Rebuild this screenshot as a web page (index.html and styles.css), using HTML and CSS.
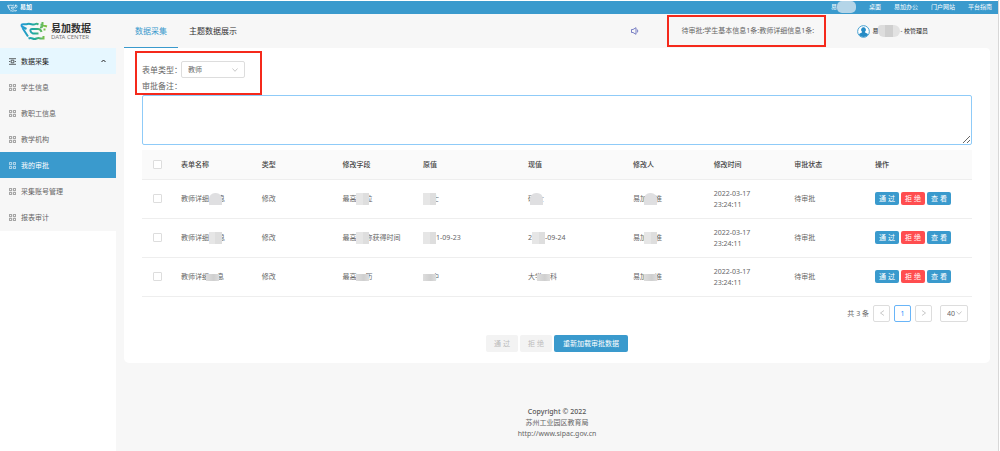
FILE: index.html
```html
<!DOCTYPE html>
<html lang="zh-CN">
<head>
<meta charset="utf-8">
<title>易加数据</title>
<link rel="stylesheet" href="styles.css">
</head>
<body>
<svg class="defs" aria-hidden="true">
  <symbol id="logo" viewBox="0 0 28 20">
    <path d="M6.500 8 1.800 5.500Q.8 3 3.500 3.200T7.500 3T11.500 3.200T15.500 3T18.500 3.500" />
    <path d="M2.500 7 8 15.500M8.500 17.500Q10.500 16.500 12.500 17.500T16.500 17.500T20.500 17.500L23.500 17.500V15" />
    <path d="M18.500 8H12Q10 8 10.500 10T13 12.500H18.500M18.500 8Q21 8.500 21.500 11" />
    <path d="M20 6.500Q22.500 6.500 22.500 4V1M20.500 3.500 27 5.500M24.500 7.500V9.500" />
  </symbol>
  <symbol id="grid" viewBox="0 0 8 8">
    <path d="M.5.5h2.500v2.500H.5zM5 .5h2.500v2.500H5zM.5 5h2.500v2.500H.5zM5 5h2.500v2.500H5z" fill="none" stroke="currentColor" stroke-width=".7"/>
  </symbol>
</svg>
<nav class="topbar">
  <a class="brand" href="#"><svg class="brand-icon"><use href="#logo"/></svg>易加</a>
  <div class="toplinks">
    <a href="#">易<span class="mask mask-top"></span></a>
    <a href="#">桌面</a>
    <a href="#">易加办公</a>
    <a href="#">门户网站</a>
    <a href="#">平台指南</a>
  </div>
</nav>
<header class="header">
  <a class="logo" href="#">
    <svg class="logo-icon"><defs><linearGradient id="lg" gradientUnits="userSpaceOnUse" x1="2" y1="6" x2="25" y2="6"><stop offset="0" stop-color="#249bd4"/><stop offset=".55" stop-color="#20a99c"/><stop offset="1" stop-color="#7ec142"/></linearGradient></defs><use href="#logo"/></svg>
    <span class="logo-text"><b>易加数据</b><small>DATA CENTER</small></span>
  </a>
  <div class="tabs">
    <a class="tab active" href="#">数据采集</a>
    <a class="tab" href="#">主题数据展示</a>
  </div>
  <div class="header-right">
    <svg class="speaker" viewBox="0 0 8 8"><path d="M.5 2.500h1.500L5 .7v6.600L2 5.500H.5zM6.300 2.500q1 1.500 0 3" fill="none" stroke="#5b62b8" stroke-width=".8"/></svg>
    <div class="notice">待审批:学生基本信息1条:教师详细信息1条:</div>
    <div class="user">
      <svg class="avatar" viewBox="0 0 14 14"><circle cx="7" cy="7" r="6.300" fill="#fff" stroke="#3a9acd"/><path d="M7 2.500a2.400 2.700 0 0 1 1.400 5q.2 1 2.600 1.600.9.400.7 1.600A6 6 0 0 1 2.300 10.700q-.2-1.200.7-1.600Q5.400 8.500 5.600 7.500A2.400 2.700 0 0 1 7 2.500" fill="#258bc5"/></svg>
      <span>易<span class="mask mask-user"></span>- 校管理员</span>
    </div>
  </div>
</header>
<div class="layout">
  <aside class="side">
    <nav class="menu">
      <a class="item parent" href="#"><svg class="icon" viewBox="0 0 8 8"><path d="M0 .8h8M0 7.200h8M0 4h1.500M6.500 4H8M2.500 2.500h3v3h-3z" fill="none" stroke="currentColor" stroke-width=".8"/></svg>数据采集<svg class="caret" viewBox="0 0 5 4"><path d="M.5 3l2-2 2 2" fill="none" stroke="currentColor"/></svg></a>
      <a class="item" href="#"><svg class="icon"><use href="#grid"/></svg>学生信息</a>
      <a class="item" href="#"><svg class="icon"><use href="#grid"/></svg>教职工信息</a>
      <a class="item" href="#"><svg class="icon"><use href="#grid"/></svg>教学机构</a>
      <a class="item current" href="#"><svg class="icon"><use href="#grid"/></svg>我的审批</a>
      <a class="item" href="#"><svg class="icon"><use href="#grid"/></svg>采集账号管理</a>
      <a class="item" href="#"><svg class="icon"><use href="#grid"/></svg>报表审计</a>
    </nav>
  </aside>
  <div class="content">
    <main class="card">
      <div class="filters">
        <div class="field"><label for="type">表单类型：</label><select id="type"><option>教师</option></select></div>
        <label class="remark-label" for="remark">审批备注：</label>
      </div>
      <textarea id="remark" class="remark"></textarea>
      <table class="table">
        <colgroup><col class="c-check"><col class="c-mid"><col class="c-mid"><col class="c-mid"><col class="c-wide"><col class="c-wide"><col class="c-mid"><col class="c-mid"><col class="c-mid"><col class="c-wide"></colgroup>
        <thead><tr><th><input type="checkbox" aria-label="全选"></th><th>表单名称</th><th>类型</th><th>修改字段</th><th>原值</th><th>现值</th><th>修改人</th><th>修改时间</th><th>审批状态</th><th>操作</th></tr></thead>
        <tbody>
          <tr><td><input type="checkbox" aria-label="选择"></td><td>教师详细<span class="mask round"></span>息</td><td>修改</td><td>最高<span class="mask"></span>位</td><td><span class="mask"></span>士</td><td>硕<span class="mask round back"></span>士</td><td>易加<span class="mask round mid"></span>准</td><td>2022-03-17<br>23:24:11</td><td>待审批</td><td><div class="ops"><button class="btn">通 过</button><button class="btn danger">拒 绝</button><button class="btn">查 看</button></div></td></tr>
          <tr><td><input type="checkbox" aria-label="选择"></td><td>教师详细<span class="mask"></span>息</td><td>修改</td><td>最高<span class="mask"></span>称获得时间</td><td><span class="mask full"></span>1-09-23</td><td>2<span class="mask full"></span>-09-24</td><td>易加<span class="mask mid"></span>准</td><td>2022-03-17<br>23:24:11</td><td>待审批</td><td><div class="ops"><button class="btn">通 过</button><button class="btn danger">拒 绝</button><button class="btn">查 看</button></div></td></tr>
          <tr><td><input type="checkbox" aria-label="选择"></td><td>教师详细<span class="mask flat mid"></span>息</td><td>修改</td><td>最高<span class="mask flat"></span>历</td><td><span class="mask flat"></span>中</td><td>大学<span class="mask flat back"></span>科</td><td>易加<span class="mask flat mid"></span>准</td><td>2022-03-17<br>23:24:11</td><td>待审批</td><td><div class="ops"><button class="btn">通 过</button><button class="btn danger">拒 绝</button><button class="btn">查 看</button></div></td></tr>
        </tbody>
      </table>
      <div class="pager">
        <span>共 3 条</span>
        <button class="page" aria-label="上一页"><svg viewBox="0 0 6 6"><path d="M5 .5 1.500 3 5 5.500"/></svg></button>
        <button class="page on">1</button>
        <button class="page" aria-label="下一页"><svg viewBox="0 0 6 6"><path d="M1 .5 4.500 3 1 5.500"/></svg></button>
        <select class="size" aria-label="每页条数"><option>40</option></select>
      </div>
      <div class="actions">
        <button class="act" disabled>通 过</button>
        <button class="act" disabled>拒 绝</button>
        <button class="act primary">重新加载审批数据</button>
      </div>
    </main>
    <footer class="footer">
      <div class="copy">Copyright © 2022</div>
      <div>苏州工业园区教育局</div>
      <a href="#">http://www.sipac.gov.cn</a>
    </footer>
  </div>
</div>
</body>
</html>
```
FILE: styles.css
```css
* { box-sizing: border-box; }
body {
  margin: 0 1px 0 0;
  padding-top: 1px;
  min-height: 100vh;
  display: flex;
  flex-direction: column;
  border-right: 1px solid #d8d8d8;
  background: #fff;
  color: #666;
  font: 7px/11px "Noto Sans", "Noto Sans CJK SC", sans-serif;
}
a { color: inherit; text-decoration: none; }
button, select, textarea { font: inherit; color: inherit; margin: 0; }
.defs { position: absolute; width: 0; height: 0; }

.topbar {
  display: flex;
  align-items: center;
  justify-content: space-between;
  height: 13px;
  padding: 0 6px 0 7px;
  background: #3a9acd;
  color: #fff;
  font-size: 6px;
}
.brand { display: flex; align-items: center; gap: 2px; font-weight: 700; }
.brand-icon { width: 11px; height: 8px; fill: none; stroke: #fff; stroke-width: 2; }
.toplinks { display: flex; gap: 13px; }

.header {
  display: flex;
  height: 34px;
  background: #f7f7f7;
}
.logo {
  display: flex;
  align-items: center;
  width: 124px;
  padding-left: 20px;
  gap: 3px;
}
.logo-icon { width: 28px; height: 20px; fill: none; stroke: url(#lg); stroke-width: 2; }
.logo-text { display: flex; flex-direction: column; color: #333; }
.logo-text b { font-size: 10px; line-height: 12px; }
.logo-text small { font-size: 6px; line-height: 6px; color: #777; }
.tabs { display: flex; font-size: 8px; color: #333; }
.tab { padding: 0 11px; line-height: 33px; border-bottom: 1px solid transparent; }
.tab.active { color: #3a9acd; border-color: #3a9acd; }
.header-right { display: flex; align-items: center; margin-left: auto; padding-right: 70px; }
.speaker { width: 8px; height: 8px; margin-right: 28px; }
.notice {
  padding: 0 5px 0 12px;
  width: 159px;
  line-height: 28px;
  border: 2px solid #f5291b;
  white-space: nowrap;
}
.user { display: flex; align-items: center; gap: 2px; margin-left: 31px; font-size: 6px; color: #222; white-space: nowrap; }
.avatar { width: 13px; height: 13px; }

.layout { flex: 1; display: flex; }
.side { width: 116px; }
.menu { background: #f7f7f7; padding-bottom: 1px; }
.item { display: flex; align-items: center; gap: 5px; height: 26px; padding: 0 10px 0 9px; }
.icon { width: 7px; height: 7px; }
.caret { width: 5px; height: 4px; margin-left: auto; }
.parent { background: #e6f7ff; color: #222; }
.current { background: #3a9acd; color: #fff; }

.content { flex: 1; padding: 0 8px; background: #f7f7f7; }
.card { padding: 3px 18px 11px; background: #fff; border-radius: 0 4px 5px 5px; }
.filters {
  width: 127px;
  margin-left: -7px;
  padding: 8px 5px 0;
  border: 2px solid #f5291b;
  font-size: 8px;
}
.field { display: flex; align-items: center; height: 17px; margin-bottom: 1px; }
.field label { width: 39px; white-space: nowrap; }
.field select {
  width: 64px;
  height: 17px;
  padding: 0 6px;
  appearance: none;
  border: 1px solid #ddd;
  border-radius: 2px;
  background: url("data:image/svg+xml,%3Csvg xmlns='http://www.w3.org/2000/svg' viewBox='0 0 6 4'%3E%3Cpath d='M.5.5 3 3.300 5.500.5' fill='none' stroke='%23bbb' stroke-width='.8'/%3E%3C/svg%3E") right 6px center / 6px 4px no-repeat #fff;
  font-size: 7px;
}
.remark-label { display: block; line-height: 14px; white-space: nowrap; }
.remark {
  display: block;
  width: 100%;
  height: 50px;
  border: 1px solid #8fcbf8;
  border-radius: 2px;
  outline: 0;
  background: #fff;
}

.table { width: 100%; margin-top: 5px; table-layout: fixed; border-collapse: collapse; }
.c-check { width: 31px; }
.c-mid { width: 10%; }
.c-wide { width: 13%; }
th, td { padding: 0 8px; text-align: left; white-space: nowrap; border-bottom: 1px solid #eee; }
th { height: 29px; background: #fafafa; font-weight: 500; color: #444; }
td { height: 39px; }
th:first-child, td:first-child { padding: 0 11px; }
input[type="checkbox"] {
  display: block;
  appearance: none;
  width: 9px;
  height: 9px;
  margin: 0;
  border: 1px solid #ddd;
  border-radius: 1px;
  background: #fff;
}
.ops { display: flex; gap: 2px; }
.btn { width: 24px; height: 13px; padding: 0; border: 0; border-radius: 2px; background: #3a9acd; color: #fff; white-space: nowrap; }
.btn.danger { background: #ff4d4f; }

.mask {
  position: relative;
  display: inline-block;
  width: 13px;
  height: 12px;
  margin: -3px -4px -3px 0;
  vertical-align: middle;
  background: linear-gradient(90deg, #e6e6e6 50%, #dedede 50%);
}
.mask.round { border-radius: 6px 6px 0 0; background: #dfdfe1; }
.mask.flat { height: 7px; background: linear-gradient(90deg, #ddd, #cfcfcf 60%, #ddd); }
.mask.mid { margin: -3px -2px -3px -3px; }
.mask.back { margin: -3px 0 -3px -5px; }
.mask.round.back { margin-right: -6px; }
.mask.full { margin: -3px 0; }
.mask-top { width: 19px; margin: -3px 0; border-radius: 5px; background: #b4d5e8; }
.mask-user { width: 22px; margin: -3px 1px -3px -1px; border-radius: 3px 6px 6px 6px; background: linear-gradient(90deg, #ddd 30%, #cfcfcf 30% 70%, #e2e2e2 70%); }

.pager { display: flex; justify-content: flex-end; align-items: center; gap: 4px; margin-top: 8px; padding-right: 4px; }
.page { display: flex; align-items: center; justify-content: center; width: 17px; height: 17px; padding: 0; border: 1px solid #ddd; border-radius: 2px; background: #fff; }
.page svg { width: 6px; height: 6px; fill: none; stroke: #bbb; stroke-width: 0.8; }
.page.on { border-color: #69b5f8; color: #1890ff; }
.size {
  width: 28px;
  height: 17px;
  margin-left: 4px;
  padding: 0 6px;
  appearance: none;
  border: 1px solid #ddd;
  border-radius: 2px;
  background: url("data:image/svg+xml,%3Csvg xmlns='http://www.w3.org/2000/svg' viewBox='0 0 6 4'%3E%3Cpath d='M.5.5 3 3.300 5.500.5' fill='none' stroke='%23bbb' stroke-width='.8'/%3E%3C/svg%3E") right 5px center / 6px 4px no-repeat #fff;
}
.actions { display: flex; justify-content: center; gap: 2px; margin-top: 13px; }
.act { height: 17px; min-width: 32px; padding: 0 8px; border: 0; border-radius: 2px; white-space: nowrap; background: #f3f3f3; color: #bbb; }
.act.primary { padding: 0 9px; background: #3a9acd; color: #fff; }

.footer { padding: 43px 0 12px; text-align: center; }
.copy { font-weight: 500; color: #555; }
```
